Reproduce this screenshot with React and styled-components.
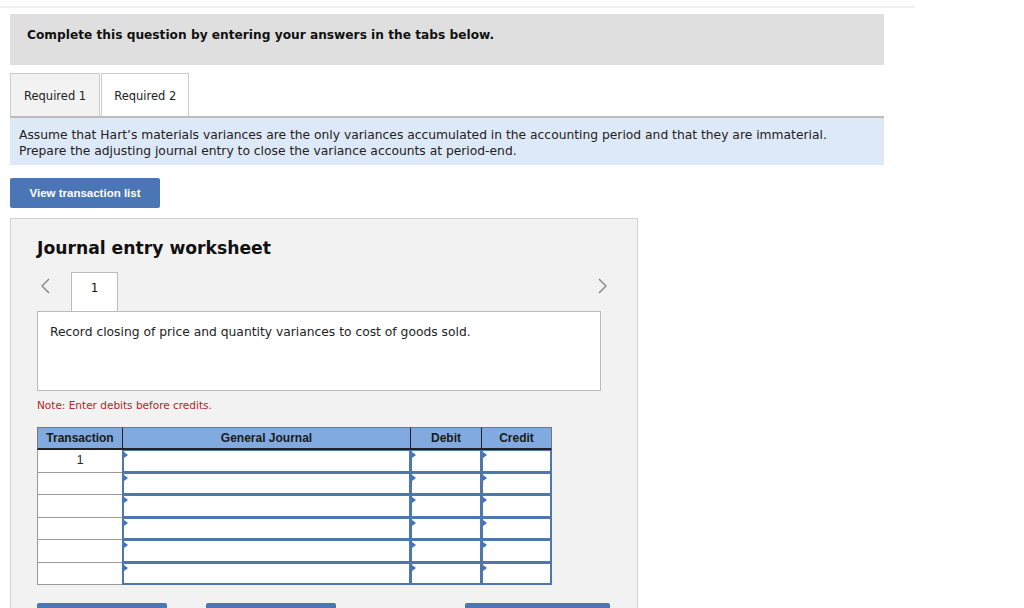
import React from "react";
import styled, { createGlobalStyle } from "styled-components";

const Global = createGlobalStyle`
  body {
    margin: 0;
    background: #fff;
    font-family: Verdana, "DejaVu Sans", sans-serif;
    color: #222;
  }
`;

const Page = styled.div`
  width: 1024px;
  height: 608px;
  overflow: hidden;
`;

const TopRule = styled.div`
  width: 915px;
  height: 2px;
  margin-top: 6px;
  background: #f0f0f0;
`;

const Content = styled.div`
  width: 874px;
  margin-left: 10px;
`;

const Banner = styled.div`
  margin-top: 6px;
  height: 51px;
  box-sizing: border-box;
  background: #dfdfdf;
  padding: 14px 0 0 17px;
  font-size: 12.2px;
  font-weight: bold;
  color: #111;
`;

const TabBar = styled.div`
  margin-top: 8px;
  display: flex;
  border-bottom: 2px solid #bcbcbc;
`;

const Tab = styled.div`
  height: 43px;
  box-sizing: border-box;
  display: flex;
  align-items: center;
  padding: 2px ${(p) => (p.active ? "12px" : "13px")} 0;
  font-size: 11.5px;
  color: #222;
  background: ${(p) => (p.active ? "#fff" : "#f2f2f2")};
  border: 1px solid #ccc;
  border-bottom: none;
  margin-bottom: ${(p) => (p.active ? "-2px" : "0")};
  margin-left: ${(p) => (p.active ? "1px" : "0")};
`;

const Info = styled.div`
  background: #dde9f7;
  padding: 9px 9px 6px;
  font-size: 12.3px;
  line-height: 16px;
  color: #222;
`;

const BlueButton = styled.button`
  display: block;
  margin-top: 13px;
  width: 150px;
  height: 30px;
  border: none;
  border-radius: 2px;
  background: #4a76b5;
  color: #fff;
  font-family: "Liberation Sans", Arial, sans-serif;
  font-weight: bold;
  font-size: 11.5px;
  padding: 0;
`;

const Panel = styled.div`
  margin-top: 10px;
  width: 628px;
  box-sizing: border-box;
  background: #f2f2f2;
  border: 1px solid #d0d0d0;
  border-bottom: none;
  padding: 17px 36px 0 26px;
`;

const Title = styled.h2`
  margin: 0;
  font-size: 17.2px;
  font-weight: bold;
  color: #111;
  line-height: 24px;
`;

const NavRow = styled.div`
  margin-top: 12px;
  display: flex;
  height: 39px;
`;

const Arrow = styled.div`
  width: ${(p) => p.w}px;
  height: 28px;
  display: flex;
  align-items: center;
  justify-content: ${(p) => p.justify || "flex-start"};
  padding-left: ${(p) => p.pl || 0}px;
  margin-right: ${(p) => p.mr || 0}px;
  box-sizing: border-box;
`;

const EntryTab = styled.div`
  width: 47px;
  height: 39px;
  box-sizing: border-box;
  background: #fff;
  border: 1px solid #bbb;
  border-bottom: none;
  font-size: 12px;
  color: #111;
  display: flex;
  justify-content: center;
  padding-top: 8px;
  margin-bottom: -1px;
  position: relative;
  z-index: 1;
`;

const Spacer = styled.div`
  flex: 1;
`;

const DescBox = styled.div`
  height: 80px;
  box-sizing: border-box;
  background: #fff;
  border: 1px solid #bbb;
  padding: 13px 12px;
  font-size: 12.3px;
  color: #222;
`;

const Note = styled.div`
  margin-top: 8px;
  font-size: 10.5px;
  color: #b0262a;
`;

const Grid = styled.div`
  margin-top: 16px;
  display: grid;
  grid-template-columns: 85px 288px 71px 71px;
  width: 515px;
  font-family: "Liberation Sans", Arial, sans-serif;
`;

const Head = styled.div`
  height: 23px;
  box-sizing: border-box;
  background: #80aae0;
  border-top: 1px solid #777;
  border-bottom: 2px solid #222;
  border-left: 1px solid ${(p) => (p.first ? "#777" : "#222")};
  border-right: ${(p) => (p.last ? "1px solid #777" : "none")};
  display: flex;
  align-items: center;
  justify-content: center;
  font-size: 12px;
  font-weight: bold;
  color: #1a1a1a;
`;

const NumCell = styled.div`
  height: 22.5px;
  box-sizing: border-box;
  background: #fff;
  border-left: 1px solid #999;
  border-bottom: 1px solid #999;
  display: flex;
  justify-content: center;
  padding-top: 3px;
  font-size: 12px;
  color: #222;
`;

const InputCell = styled.div`
  height: 22.5px;
  box-sizing: border-box;
  background: #fff;
  border: 2px solid #4f77ad;
  border-top-width: 1px;
  border-right-width: ${(p) => (p.last ? 2 : 1)}px;
  position: relative;
  &::before {
    content: "";
    position: absolute;
    left: 0;
    top: 1px;
    border-style: solid;
    border-width: 3px 0 3px 4px;
    border-color: transparent transparent transparent #3b73c8;
  }
`;

const BottomRow = styled.div`
  margin-top: 18px;
  display: flex;
  gap: 39px;
`;

const StubButton = styled.div`
  flex-shrink: 0;
  width: ${(p) => p.w}px;
  height: 20px;
  margin-left: ${(p) => p.ml || 0}px;
  background: #4a76b5;
  border-radius: 2px;
`;

function Chevron({ dir }) {
  return (
    <svg width="9" height="16" viewBox="0 0 9 16">
      <path
        d={dir === "left" ? "M8 1 L1 8 L8 15" : "M1 1 L8 8 L1 15"}
        fill="none"
        stroke="#8a8a8a"
        strokeWidth="1.5"
      />
    </svg>
  );
}

const rows = ["1", "", "", "", "", ""];

export default function App() {
  return (
    <Page>
      <Global />
      <TopRule />
      <Content>
        <Banner>Complete this question by entering your answers in the tabs below.</Banner>
        <TabBar>
          <Tab>Required 1</Tab>
          <Tab active>Required 2</Tab>
        </TabBar>
        <Info>
          Assume that Hart’s materials variances are the only variances accumulated in the accounting period and that they are immaterial.
          <br />
          Prepare the adjusting journal entry to close the variance accounts at period-end.
        </Info>
        <BlueButton>View transaction list</BlueButton>
        <Panel>
          <Title>Journal entry worksheet</Title>
          <NavRow>
            <Arrow w={34} pl={4}>
              <Chevron dir="left" />
            </Arrow>
            <EntryTab>1</EntryTab>
            <Spacer />
            <Arrow w={20} justify="flex-end" mr={-6}>
              <Chevron dir="right" />
            </Arrow>
          </NavRow>
          <DescBox>Record closing of price and quantity variances to cost of goods sold.</DescBox>
          <Note>Note: Enter debits before credits.</Note>
          <Grid>
            <Head first>Transaction</Head>
            <Head>General Journal</Head>
            <Head>Debit</Head>
            <Head last>Credit</Head>
            {rows.map((r, i) => (
              <React.Fragment key={i}>
                <NumCell>{r}</NumCell>
                <InputCell />
                <InputCell />
                <InputCell last />
              </React.Fragment>
            ))}
          </Grid>
          <BottomRow>
            <StubButton w={130} />
            <StubButton w={130} />
            <StubButton w={145} ml={90} />
          </BottomRow>
        </Panel>
      </Content>
    </Page>
  );
}
